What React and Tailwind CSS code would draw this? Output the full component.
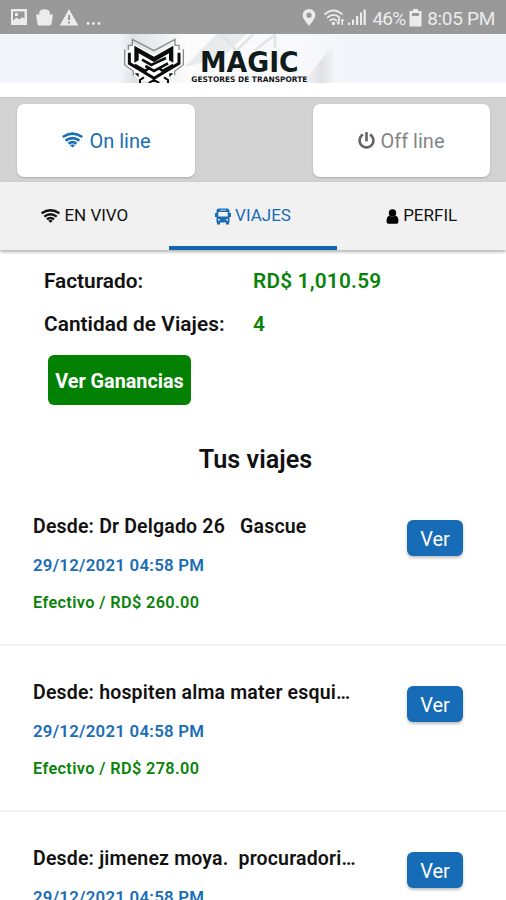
import { FaPowerOff } from 'react-icons/fa'

const trips = [
  { id: 1, from: 'Dr Delgado 26   Gascue', date: '29/12/2021 04:58 PM', pay: 'Efectivo / RD$ 260.00' },
  { id: 2, from: 'hospiten alma mater esqui…', date: '29/12/2021 04:58 PM', pay: 'Efectivo / RD$ 278.00' },
  { id: 3, from: 'jimenez moya.  procuradori…', date: '29/12/2021 04:58 PM' },
]

function Wifi({ className }) {
  return (
    <svg viewBox="0 0 64 46" className={className} fill="none" stroke="currentColor" strokeWidth="8">
      <path d="M2 14q30-21 60 0" />
      <path d="M11 25q21-16 42 0" />
      <path d="M20 34q12-9 24 0" />
      <path d="M32 36l8 3-8 7-8-7z" fill="currentColor" stroke="none" />
    </svg>
  )
}

function Bus({ className }) {
  return (
    <svg viewBox="0 0 16 17" className={className} fill="currentColor">
      <path fillRule="evenodd" d="M4 .5h8q2.500 0 2.500 2.500V14.500h-13V3Q1.500.5 4 .5zM3.300 4v4.500h9.400V4zM5 1.700v.8h6v-.8zM3 11v1.500h1.800V11zM11.200 11v1.500H13V11z" />
      <path d="M0 5h2v4H0zM14 5h2v4h-2zM2 14h3v2.500H2zM11 14h3v2.500h-3z" />
    </svg>
  )
}

function StatusBar() {
  return (
    <div className="h-[34px] shrink-0 bg-[#999999] flex items-center justify-between pl-[10px] pr-[11px] text-[#ececec]">
      <svg width="94" height="20" viewBox="0 0 94 20" fill="#ececec" className="mt-[2px]">
        <path fillRule="evenodd" d="M1 1h16v16H1zM3 3.500v9l3.500-3 3 2 3-2.500 2 2v-7.500zM5 5h3v3h-3z" />
        <path d="M26 6.500h17l-1.500 9.500q-.3 1.500-2 1.500h-10q-1.700 0-2-1.500z" />
        <path d="M30 8V5q0-3 4.500-3t4.500 3v3" fill="#ececec" stroke="#ececec" strokeWidth="1.500" />
        <path fillRule="evenodd" d="M59 1l9.300 16.500H49.800zM58 7v5h2V7zM58 13.500v2h2v-2z" />
        <circle cx="78" cy="15.500" r="1.400" />
        <circle cx="83.500" cy="15.500" r="1.400" />
        <circle cx="89" cy="15.500" r="1.400" />
      </svg>
      <div className="flex items-center mt-[2px]">
        <svg width="66" height="20" viewBox="0 0 66 20" fill="#ececec" className="mr-[5px]">
          <path fillRule="evenodd" d="M7 1a6.300 6.300 0 0 1 6.300 6.300C13.300 11 9 15 7 18 5 15 .7 11 .7 7.300A6.300 6.300 0 0 1 7 1zM7 4.500a2.700 2.700 0 1 0 0 5.400a2.700 2.700 0 0 0 0-5.400z" />
          <g fill="none" stroke="#ececec" strokeWidth="1.700">
            <path d="M22.500 6.500q9-8 18 0M25 9.800q6.500-6 13 0M27.500 13q4-3.800 7.500 0" />
          </g>
          <circle cx="31.500" cy="15.500" r="1.700" />
          <path d="M36 10v4h-2l2.700 3 1-1V10zM39.500 17v-4h-1.500l2.500-2.500 2 2.500h-1.500v4z" />
          <path d="M46 14.500h2V17h-2zM50 11.500h2V17h-2zM54 8h2.200v9H54zM58 4.500h2V17h-2zM61.500 1.500h2.300V17h-2.300z" />
        </svg>
        <span className="text-[19px] leading-none tracking-[-0.900px] mr-[4px]">46%</span>
        <svg width="13" height="18" viewBox="0 0 13 18" fill="#ececec" className="mr-[5px]">
          <path fillRule="evenodd" d="M4 0h5v2h3.500v15.500H.5V2H4zM3 4v3h7V4z" />
        </svg>
        <span className="text-[19px] leading-none tracking-[-0.300px]">8:05 PM</span>
      </div>
    </div>
  )
}

function Logo() {
  return (
    <svg width="225" height="49" viewBox="360 102 675 147" className="ml-[120px]">
      <defs>
        <linearGradient id="band" x1="0" x2="1">
          <stop offset="0" stopColor="#f3f5fa" />
          <stop offset="0.060" stopColor="#e0e1e4" />
          <stop offset="0.300" stopColor="#fcfcfd" />
          <stop offset="0.850" stopColor="#f7f8fa" />
          <stop offset="1" stopColor="#f3f5fa" />
        </linearGradient>
        <linearGradient id="wedge" x1="0" x2="1">
          <stop offset="0" stopColor="#f4f5f7" />
          <stop offset="0.600" stopColor="#e1e2e5" />
          <stop offset="1" stopColor="#f3f5fa" />
        </linearGradient>
      </defs>
      <rect x="360" y="102" width="675" height="147" fill="url(#band)" />
      <path d="M555 200L650 102H740L665 175z" fill="#e9eaec" />
      <path d="M660 102l50 50 50-50M765 150l60-46v40" fill="none" stroke="#e2e4e6" strokeWidth="8" />
      <path d="M905 249L1005 130V249z" fill="url(#wedge)" />

      {/* emblem */}
      <g transform="translate(354 102)">
        <path d="M44 30L108 62L170 30L196 60V96L150 140H66L24 96V60z" fill="#fff" />
        <g fill="none" stroke="#8b8d8f" strokeWidth="4">
          <path d="M31 48V34H43V16L108 50L171 16V34H183V48" />
          <path d="M20 46V92L46 112V124M196 46V92L170 112V124" />
        </g>
        <path d="M49 35L108 68L166 35V86L153 79V58L108 84L62 58V79L49 86z" fill="#0b0c0c" />
        <g fill="none" stroke="#0b0c0c">
          <path d="M34 56V88L108 133L183 88V56" strokeWidth="9" />
          <path d="M50 93L82 111L94 101M166 93L134 111L122 101" strokeWidth="8" />
          <path d="M72 77L100 93L108 89L144 72M82 96L108 111L150 88" strokeWidth="8" />
          <path d="M78 130L66 138V147M138 130L150 138V147M92 147L108 138L124 147" strokeWidth="6" />
        </g>
        <path d="M50 118h12v12zM166 118h-12v12z" fill="#0b0c0c" />
      </g>

      <text x="600" y="217" textLength="296" lengthAdjust="spacingAndGlyphs" fontFamily="'DejaVu Sans', sans-serif" fontSize="84" fontWeight="700" fill="#101b1c">MAGIC</text>
      <text x="574" y="245" textLength="348" lengthAdjust="spacingAndGlyphs" fontFamily="'DejaVu Sans', sans-serif" fontSize="23" fontWeight="700" fill="#101414">GESTORES DE TRANSPORTE</text>
    </svg>
  )
}

function TripRow({ trip }) {
  return (
    <div className="h-[166px] shrink-0 border-b-2 border-[#f1f1f1] flex justify-between pl-[33px] pr-[43px]">
      <div className="pt-[34px]">
        <p className="text-[19.500px] leading-[26px] font-semibold tracking-[0.180px] whitespace-pre">Desde: {trip.from}</p>
        <p className="text-[16.800px] leading-[20px] mt-[15px] font-semibold tracking-[0.270px] text-[#1a6db5]">{trip.date}</p>
        {trip.pay && <p className="text-[16.300px] leading-[20px] mt-[18px] font-semibold tracking-[0.370px] text-[#0a830a]">{trip.pay}</p>}
      </div>
      <button className="mt-[40px] w-[56px] h-[36px] rounded-[6px] bg-[#176cb7] text-white text-[20px] shadow-[0_2px_3px_rgba(0,0,0,0.25)] pt-px">Ver</button>
    </div>
  )
}

export default function App() {
  return (
    <div className="w-full h-[900px] overflow-hidden bg-white flex flex-col text-[#111] font-[Roboto,sans-serif]">
      <StatusBar />

      <div className="h-[63px] shrink-0 bg-white">
        <div className="h-[49px] bg-[#f3f5fa]">
          <Logo />
        </div>
      </div>

      <div className="h-[85px] shrink-0 bg-[#d2d2d2] border-t border-[#c4c4c4] flex justify-between px-[17px] pt-[6px] text-[20px]">
        <button className="w-[178px] h-[73px] rounded-[7px] bg-white flex items-center justify-center gap-[6px] pl-px text-[#1a6db5] shadow-[0_1px_2px_rgba(0,0,0,0.2)]">
          <Wifi className="w-[21px] h-[16px] mt-[-2px]" />
          On line
        </button>
        <button className="w-[177px] h-[73px] mr-[-1px] rounded-[7px] bg-white flex items-center justify-center gap-[5px] text-[#858585] shadow-[0_1px_2px_rgba(0,0,0,0.2)]">
          <FaPowerOff className="w-[17px] h-[17px] text-[#666]" />
          Off line
        </button>
      </div>

      <div className="h-[68px] shrink-0 bg-[#f1f1f1] grid grid-cols-3 text-[17px] shadow-[0_2px_3px_rgba(0,0,0,0.3)]">
        <div className="flex items-center justify-center gap-[4px] pl-px">
          <Wifi className="w-[19px] h-[14px]" />
          EN VIVO
        </div>
        <div className="flex items-center justify-center gap-[4px] text-[#1a6db5] border-b-4 border-[#1465b0] pt-1">
          <Bus className="w-[16px] h-[17px]" />
          VIAJES
        </div>
        <div className="flex items-center justify-center gap-[4px]">
          <svg viewBox="0 0 12 15" className="w-[13px] h-[15px]">
            <circle cx="6" cy="4" r="3.700" />
            <path d="M3 6.500q3 2.500 6 0Q12 7.500 12 12.500 12 14.700 10 14.700H2Q0 14.700 0 12.500 0 7.500 3 6.500z" />
          </svg>
          PERFIL
        </div>
      </div>

      <div className="shrink-0 pt-[18px] pl-[44px] h-[238px]">
        <div className="flex text-[20.800px] leading-[26px] font-semibold">
          <span className="w-[209px]">Facturado:</span>
          <span className="text-[#0a830a] tracking-[0.200px]">RD$ 1,010.59</span>
        </div>
        <div className="flex text-[20.800px] leading-[26px] font-semibold mt-[17px] tracking-[0.060px]">
          <span className="w-[209px]">Cantidad de Viajes:</span>
          <span className="text-[#0a830a]">4</span>
        </div>
        <button className="mt-[18px] ml-[4px] w-[143px] h-[50px] rounded-[6px] bg-[#038103] text-white text-[19.800px] font-bold pt-[3px]">Ver Ganancias</button>
        <h2 className="mt-[39px] mr-[39px] text-[25.200px] leading-[32px] font-semibold text-center">Tus viajes</h2>
      </div>

      <div className="mt-[-8px]">
        {trips.map((trip) => (
          <TripRow key={trip.id} trip={trip} />
        ))}
      </div>
    </div>
  )
}
